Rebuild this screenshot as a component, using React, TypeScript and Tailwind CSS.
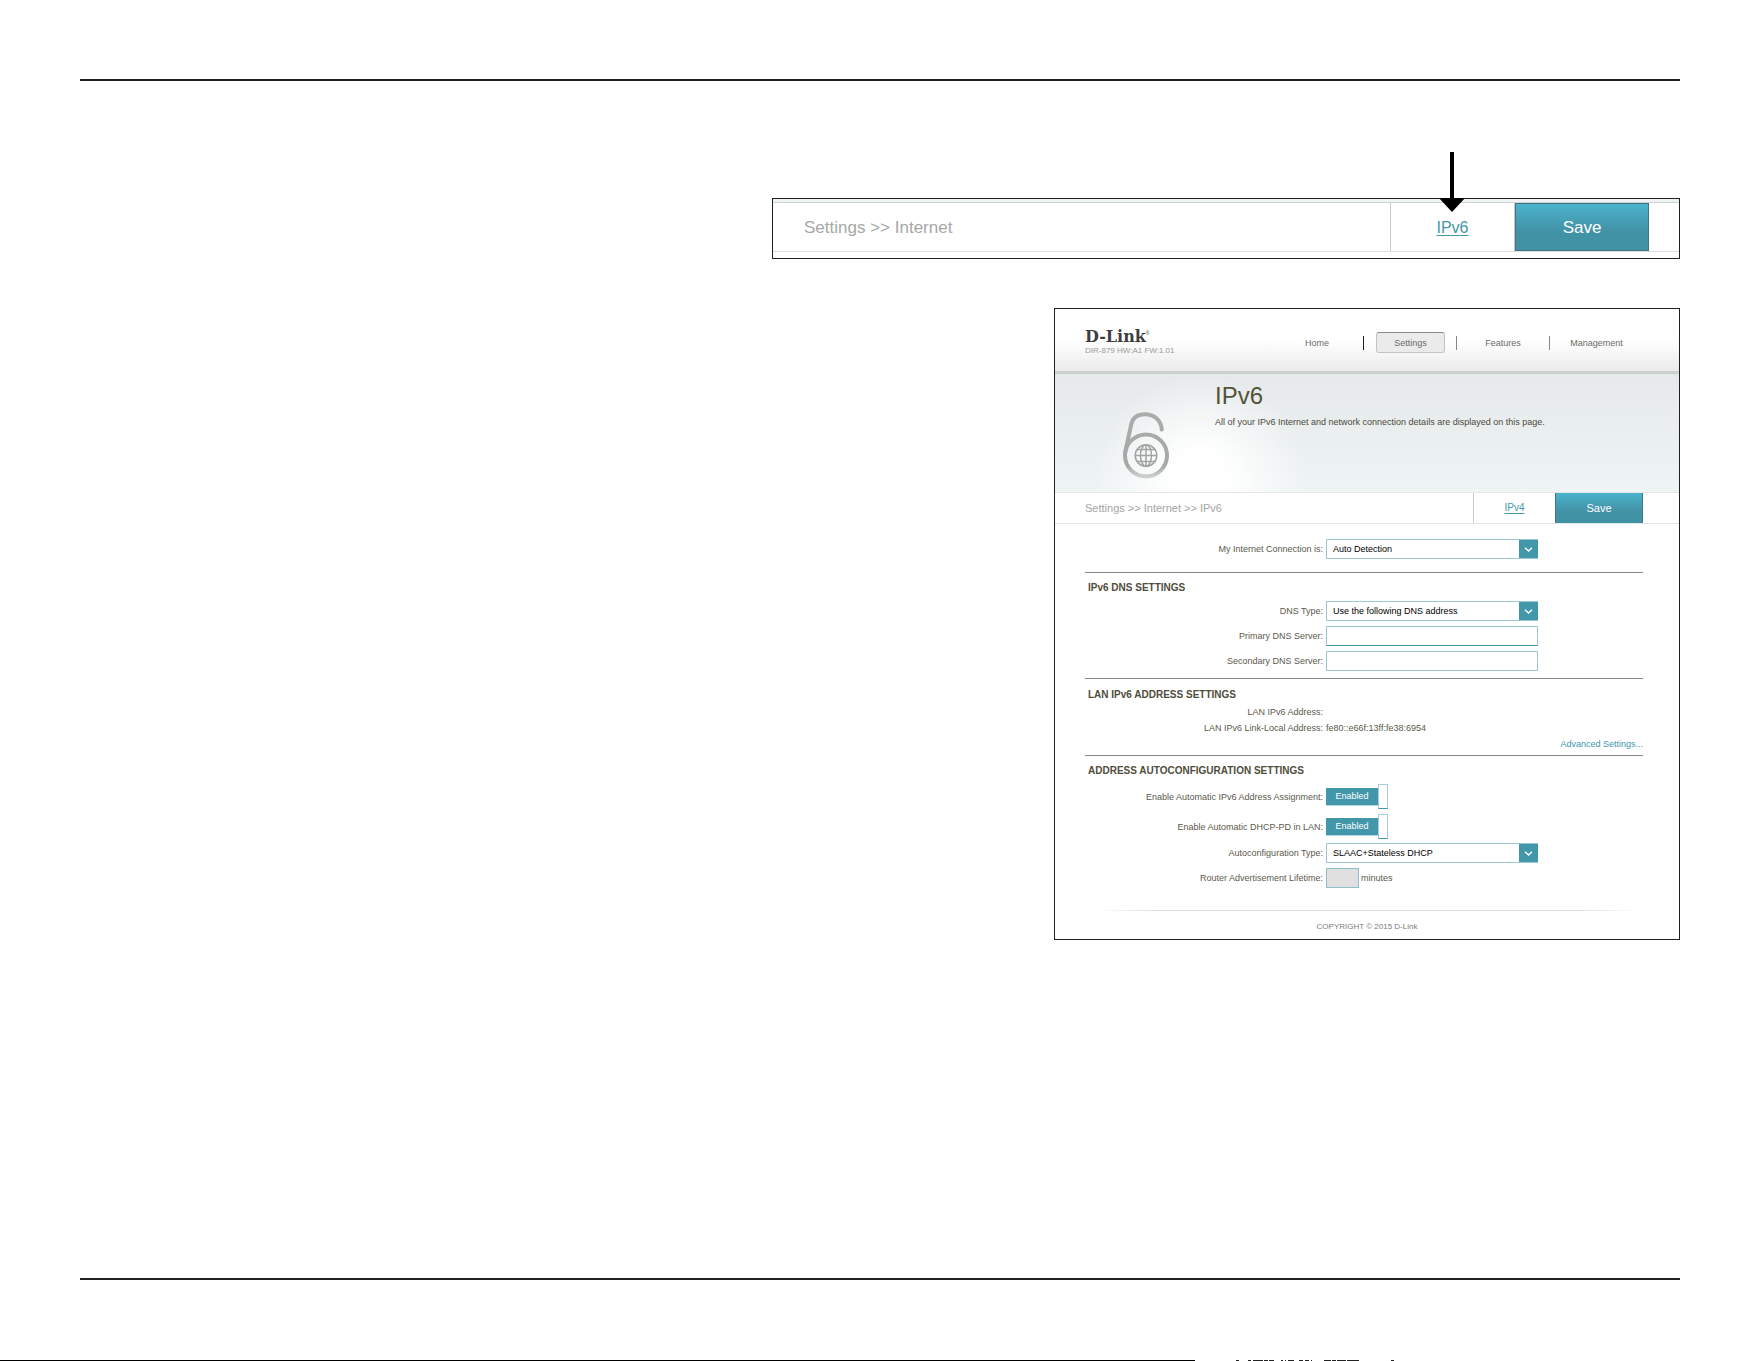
import { useState } from "react";
import type { ReactNode } from "react";

const navItems = ["Home", "Settings", "Features", "Management"];

// [gap, width] of each dash along the bottom edge
const edgeDashes = [
  [41, 3], [9, 3], [2, 10], [1, 4], [1, 5], [7, 2], [2, 1], [2, 6], [5, 4],
  [2, 4], [2, 1], [12, 7], [1, 4], [1, 9], [1, 12], [32, 3],
];

const DownArrow = () => (
  <svg className="absolute top-[-47px] right-[214px] h-[60px] w-[26px]" viewBox="0 0 26 60" aria-hidden="true">
    <path d="M11 0h4v46h11L13 60 0 46h11z" fill="#000" />
  </svg>
);

const LockIcon = () => (
  <svg className="h-[67px] w-[46px]" viewBox="0 0 46 67" fill="none" aria-hidden="true">
    <defs>
      <linearGradient id="lock" x1="0" y1="0" x2="0" y2="67" gradientUnits="userSpaceOnUse">
        <stop offset="0" stopColor="#aaacac" />
        <stop offset="0.8" stopColor="#a6a8a8" />
        <stop offset="1" stopColor="#d5d7d7" />
      </linearGradient>
    </defs>
    <g stroke="url(#lock)" strokeWidth="4">
      <circle cx="23" cy="43.500" r="21" />
      <path d="M2.300 40 8.300 12C10 5 15.500 2.200 22 2.200 31 2.200 38 8 38.800 17.500" strokeLinecap="round" />
    </g>
    <g stroke="#a3a5a5" strokeWidth="1.500">
      <circle cx="23" cy="43.500" r="10.800" />
      <ellipse cx="23" cy="43.500" rx="5.500" ry="10.800" />
      <path d="M23 32.700v21.600M12.200 43.500h21.600M14.200 37.500h17.600M14.200 49.500h17.600" />
    </g>
  </svg>
);

const Row = ({ label, id, className, children }: { label: string; id?: string; className: string; children?: ReactNode }) => (
  <div className={`grid grid-cols-[238fr_317fr] items-center gap-x-[3px] ${className}`}>
    <label htmlFor={id} className="text-right whitespace-nowrap">
      {label}
    </label>
    <div className="flex items-center">{children}</div>
  </div>
);

const Select = ({ id, value }: { id: string; value: string }) => (
  <div className="relative w-[212px]">
    <select
      id={id}
      className="block h-5 w-full appearance-none border border-[#9cc8d0] bg-white pl-1.5 text-[9px] leading-3 text-black"
    >
      <option>{value}</option>
    </select>
    <span className="pointer-events-none absolute inset-y-px right-0 flex w-[19px] items-center justify-center bg-[#4397ab]">
      <svg className="h-[5px] w-[9px]" viewBox="0 0 9 5" fill="none" aria-hidden="true">
        <path d="M1 .8 4.500 4 8 .8" stroke="#fff" strokeWidth="1.400" />
      </svg>
    </span>
  </div>
);

const Toggle = ({ id }: { id: string }) => {
  const [on, setOn] = useState(true);
  return (
    <button
      id={id}
      type="button"
      role="switch"
      aria-checked={on}
      onClick={() => setOn(!on)}
      className="flex h-[25px] items-center"
    >
      <span className="flex h-[18px] w-[52px] items-center justify-center border-b border-[#b5d8e0] bg-[#4397ab] text-[9px] text-white">
        {on ? "Enabled" : "Disabled"}
      </span>
      <span className="h-[25px] w-[10px] border border-[#a5cdda] border-b-[#4397ab] bg-white" />
    </button>
  );
};

const Heading = ({ children }: { children: ReactNode }) => (
  <h2 className="pl-[3px] text-[10px] leading-3 font-bold text-[#4f4d3c]">{children}</h2>
);

const App = () => (
  <div className="relative flex min-h-screen flex-col overflow-hidden bg-white pt-[79px] pr-[81px] pb-[81px] pl-[80px] font-['Liberation_Sans',Arial,sans-serif]">
    <hr className="border-t-2 border-[#231f20]" />

    <main className="mt-[117px] grid grid-cols-[692fr_282fr_626fr]">
      {/* Toolbar */}
      <section className="relative col-span-2 col-start-2 border border-[#231f20] pb-[6px]">
        <div className="h-[3px] bg-[#eef3f3]" />
        <div className="flex h-[50px] items-stretch border-y border-t-[#cdd1d1] border-b-[#dedede] pr-[30px] pl-[31px]">
          <p className="flex-1 self-center pt-0.5 text-[17px] leading-5 text-[#a6a8a6]">Settings &gt;&gt; Internet</p>
          <a
            href="#ipv6"
            className="flex w-[125px] items-center justify-center border-x border-[#c8c8c8] pt-0.5 text-[16px] text-[#4397ab] underline underline-offset-2"
          >
            IPv6
          </a>
          <button
            type="button"
            className="w-[134px] border border-[#417583] bg-linear-to-b from-[#4bb3cd] to-[#4292a6] to-60% pt-0.5 text-[17px] text-white"
          >
            Save
          </button>
        </div>
        <DownArrow />
      </section>

      {/* Settings page */}
      <section className="col-start-3 mt-[49px] border border-[#231f20] text-[9px] leading-3 text-[#5b594d]">
        <header className="flex h-[65px] justify-between border-b-[3px] border-[#cbd0d0] bg-linear-to-b from-white from-50% to-[#ebebeb] pr-[36px] pl-[30px]">
          <div className="pt-[18px]">
            <div className="flex items-start text-[#3d3f40]">
              <span className="font-['DejaVu_Serif',serif] text-[16px] leading-5 font-bold">D-Link</span>
              <span className="text-[5px] leading-3">®</span>
            </div>
            <p className="text-[8px] leading-2 text-[#9a9a96]">DIR-879 HW:A1 FW:1.01</p>
          </div>
          <nav className="flex items-start pt-[23px]">
            {navItems.map((item) => (
              <div key={item} className="flex h-[21px] w-[93px] items-center justify-center last:[&>span]:hidden first:[&>span]:bg-[#231f20]">
                <a
                  href={`#${item.toLowerCase()}`}
                  className={
                    item === "Settings"
                      ? "mr-auto ml-3 flex h-[21px] w-[69px] items-center justify-center rounded-[3px] border border-[#c4c4c4] border-t-[#8a8a90] bg-[#ebebeb] text-[#6b6b68]"
                      : "mx-auto text-[#6b6b68]"
                  }
                >
                  {item}
                </a>
                <span className="h-[14px] w-px bg-[#85858a]" />
              </div>
            ))}
          </nav>
        </header>

        <div className="grid h-[118px] grid-cols-[160fr_464fr] bg-[radial-gradient(circle_at_145px_104px,#ffffff_0,#ffffff_24px,#ffffff00_104px),linear-gradient(to_bottom,#e5e9ea,#eff4f4)]">
          <div className="pt-[38px] pl-[68px]">
            <LockIcon />
          </div>
          <div className="pt-1.5">
            <h1 className="text-[24px] leading-8 text-[#55523a]">IPv6</h1>
            <p className="mt-1 text-[#4c4a40]">
              All of your IPv6 Internet and network connection details are displayed on this page.
            </p>
          </div>
        </div>

        <div className="flex h-8 border-y border-[#e4e6e6] pr-[36px] pl-[30px]">
          <p className="flex-1 self-center text-[11px] text-[#a3a5a3]">Settings &gt;&gt; Internet &gt;&gt; IPv6</p>
          <a
            href="#ipv4"
            className="flex w-[82px] items-center justify-center border-l border-[#c8c8c8] text-[10px] text-[#4397ab] underline underline-offset-2"
          >
            IPv4
          </a>
          <button
            type="button"
            className="w-[88px] border-x border-[#417583] bg-linear-to-b from-[#4bb3cd] to-[#4292a6] to-60% text-[11px] text-white"
          >
            Save
          </button>
        </div>

        <form className="pr-[36px] pl-[30px]">
          <Row label="My Internet Connection is:" id="connection" className="mt-[15px] h-5">
            <Select id="connection" value="Auto Detection" />
          </Row>

          <section className="mt-[13px] border-t border-[#85878a] pt-[9px]">
            <Heading>IPv6 DNS SETTINGS</Heading>
            <div className="mt-[7px] flex flex-col gap-[5px]">
              <Row label="DNS Type:" id="dns-type" className="h-5">
                <Select id="dns-type" value="Use the following DNS address" />
              </Row>
              <Row label="Primary DNS Server:" id="primary" className="h-5">
                <input id="primary" className="h-5 w-[212px] border border-[#9cc8d0] border-b-[#4397ab] px-1.5" />
              </Row>
              <Row label="Secondary DNS Server:" id="secondary" className="h-5">
                <input id="secondary" className="h-5 w-[212px] border border-[#9cc8d0] px-1.5" />
              </Row>
            </div>
          </section>

          <section className="mt-[7px] border-t border-[#85878a] pt-[10px]">
            <Heading>LAN IPv6 ADDRESS SETTINGS</Heading>
            <Row label="LAN IPv6 Address:" className="mt-[3px] h-4" />
            <Row label="LAN IPv6 Link-Local Address:" className="h-4">
              fe80::e66f:13ff:fe38:6954
            </Row>
            <div className="flex h-4 items-center justify-end">
              <a href="#advanced" className="text-[#4397ab]">
                Advanced Settings...
              </a>
            </div>
          </section>

          <section className="mt-[3px] border-t border-[#85878a] pt-[9px]">
            <Heading>ADDRESS AUTOCONFIGURATION SETTINGS</Heading>
            <Row label="Enable Automatic IPv6 Address Assignment:" id="assignment" className="mt-[7px]">
              <Toggle id="assignment" />
            </Row>
            <Row label="Enable Automatic DHCP-PD in LAN:" id="dhcp-pd" className="mt-[5px]">
              <Toggle id="dhcp-pd" />
            </Row>
            <Row label="Autoconfiguration Type:" id="auto-type" className="mt-1 h-5">
              <Select id="auto-type" value="SLAAC+Stateless DHCP" />
            </Row>
            <Row label="Router Advertisement Lifetime:" id="lifetime" className="mt-[5px] h-5">
              <input id="lifetime" disabled className="h-5 w-[33px] border border-[#8fbfc9] bg-[#e0e0e0] px-1" />
              <span className="ml-0.5">minutes</span>
            </Row>
          </section>
        </form>

        <footer className="mt-[22px] px-[40px] pb-[6px] text-center text-[8px] text-[#7c7c7a]">
          <div className="mb-2.5 h-px bg-[linear-gradient(to_right,transparent,#dcdcdc_12%,#dcdcdc_88%,transparent)]" />
          COPYRIGHT © 2015 D-Link
        </footer>
      </section>
    </main>

    <hr className="mt-auto border-t-2 border-[#231f20]" />
    <div className="absolute bottom-0 left-0 flex h-px">
      <span className="w-[1195px] bg-black" />
      {edgeDashes.map(([gap, width], i) => (
        <span key={i} className="bg-[#222222]" style={{ marginLeft: gap, width }} />
      ))}
    </div>
  </div>
);

export default App;
